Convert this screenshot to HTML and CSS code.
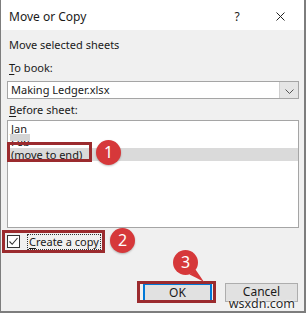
FILE: index.html
```html
<!DOCTYPE html>
<html>
<head>
<meta charset="utf-8">
<link rel="stylesheet" href="styles.css">
</head>
<body>
<div class="window">
  <div class="titlebar">
    <span class="title">Move or Copy</span>
    <span class="help">?</span>
    <span class="close"><svg width="9" height="9" viewBox="0 0 9 9"><path d="M0.5 0.5 L8.5 8.5 M8.5 0.5 L0.5 8.5" stroke="#222" stroke-width="1" fill="none"/></svg></span>
  </div>
  <div class="content">
    <div class="label first">Move selected sheets</div>
    <div class="label"><u>T</u>o book:</div>
    <div class="combo">
      <span class="combo-text">Making Ledger.xlsx</span>
      <span class="combo-btn"><svg width="9" height="5" viewBox="0 0 9 5"><path d="M0.5 0.5 L4.5 4.5 L8.5 0.5" stroke="#555" stroke-width="1" fill="none"/></svg></span>
    </div>
    <div class="label before"><u>B</u>efore sheet:</div>
    <div class="listbox">
      <div class="item">Jan</div>
      <div class="item feb">Feb<span class="smudge"></span></div>
      <div class="item selected">(move to end)<span class="markbox"></span><span class="badge b1">1</span></div>
    </div>
    <div class="checkrow">
      <span class="checkbox"><svg width="11" height="11" viewBox="0 0 11 11"><path d="M1.5 5.5 L4.2 8.3 L9.5 2" stroke="#333" stroke-width="1.1" fill="none"/></svg></span>
      <span class="checklabel"><u>C</u>reate a copy</span>
      <span class="badge b2">2</span>
    </div>
    <div class="buttons">
      <span class="btn ok">OK<span class="okbox"></span>
        <span class="pin"><svg width="34" height="34" viewBox="0 0 34 34"><path d="M22.5 19.5 Q27 26 31 32 Q24 28 16.5 24.5 Z" fill="#d6383a"/><circle cx="12.5" cy="12.5" r="12.5" fill="#d6383a"/></svg><span class="pin-num">3</span></span>
      </span>
      <span class="btn cancel">Cancel</span>
    </div>
  </div>
  <span class="watermark">wsxdn.com</span>
</div>
</body>
</html>
```

FILE: styles.css
```css
* { box-sizing: border-box; }
html, body { margin: 0; padding: 0; }
body {
  font-family: "Noto Sans", "Open Sans", sans-serif;
  font-size: 11px;
  color: #1a1a1a;
}
.window {
  position: relative;
  width: 306px;
  height: 313px;
  border-left: 1px solid #7d7d7d;
  border-right: 2px solid #7d7d7d;
  border-bottom: 2px solid #7d7d7d;
  background: #f0f0f0;
  display: flex;
  flex-direction: column;
}
.titlebar {
  height: 30px;
  background: #fff;
  display: flex;
  align-items: center;
  padding: 2px 0 0 8px;
  flex: none;
}
.title { font-size: 12px; flex: 1; }
.help { width: 14px; text-align: center; font-size: 12px; margin-right: 32px; }
.close { width: 9px; height: 9px; margin-right: 19px; display: flex; }
.content {
  flex: 1;
  padding: 8px 6px 0 6px;
  display: flex;
  flex-direction: column;
}
.label { height: 14px; line-height: 14px; padding-left: 2px; }
.first { margin-bottom: 9px; }
.label u, .checklabel u { text-decoration-thickness: 1px; text-underline-offset: 2px; }
.combo {
  margin-top: 6px;
  height: 18px;
  width: 292px;
  border: 1px solid #a5a5a5;
  background: #fff;
  display: flex;
  align-items: center;
}
.combo-text { flex: 1; padding-left: 3px; line-height: 14px; }
.combo-btn {
  width: 19px;
  height: 16px;
  background: #e5e5e5;
  border-left: 1px solid #cfcfcf;
  display: flex;
  align-items: center;
  justify-content: center;
  padding-top: 2px;
}
.before { margin-top: 4px; }
.listbox {
  margin-top: 3px;
  width: 292px;
  height: 108px;
  border: 1px solid #a5a5a5;
  background: #fff;
  padding-top: 1px;
}
.item { height: 13px; line-height: 13px; padding-left: 3px; position: relative; }
.smudge {
  position: absolute;
  left: 2px;
  top: -1px;
  width: 20px;
  height: 7px;
  background: #d4d4d4;
}
.selected { background: #dadada; }
.markbox {
  position: absolute;
  left: -1px;
  top: -6px;
  width: 85px;
  height: 20px;
  border: 3px solid #9b2b2e;
}
.badge {
  position: absolute;
  width: 25px;
  height: 25px;
  border-radius: 50%;
  background: #d6383a;
  color: #fff;
  font-size: 16px;
  line-height: 25px;
  text-align: center;
  box-shadow: 0 1px 2px rgba(0,0,0,0.25);
}
.b1 { left: 88px; top: -8px; }
.checkrow {
  position: relative;
  margin-top: 2px;
  margin-left: -5px;
  height: 23px;
  width: 103px;
  display: flex;
  align-items: center;
  padding-left: 2px;
  border: 3px solid #9b2b2e;
  white-space: nowrap;
}
.checkbox {
  width: 13px; height: 13px;
  border: 1px solid #333;
  background: #fff;
  display: flex; align-items: center; justify-content: center;
  margin-right: 8px;
  flex: none;
}
.checklabel { outline: 1px dotted #333; outline-offset: 0; line-height: 14px; padding: 0 1px; }
.b2 { left: 105px; top: -5px; }
.buttons {
  margin-top: 30px;
  display: flex;
  justify-content: flex-end;
  gap: 13px;
}
.btn {
  position: relative;
  height: 19px;
  line-height: 17px;
  text-align: center;
  background: #e1e1e1;
  border: 1px solid #adadad;
  font-size: 12px;
}
.ok { width: 69px; border: 2px solid #0078d7; line-height: 15px; }
.okbox {
  position: absolute;
  left: -8px;
  top: -4px;
  width: 79px;
  height: 22px;
  border: 3px solid #9b2b2e;
}
.cancel { width: 73px; line-height: 15px; }
.pin { position: absolute; left: 28px; top: -35px; width: 34px; height: 34px; }
.pin svg { display: block; }
.pin-num { position: absolute; left: 0; top: 0; width: 25px; text-align: center; color: #fff; font-size: 16px; line-height: 25px; }
.watermark {
  position: absolute;
  right: 9px;
  bottom: 1px;
  font-size: 12.5px;
  color: #2a2a2a;
  line-height: 13px;
  text-shadow: 0 0 2px #fff, 0 0 2px #fff, 0 0 1px #fff;
}
```
